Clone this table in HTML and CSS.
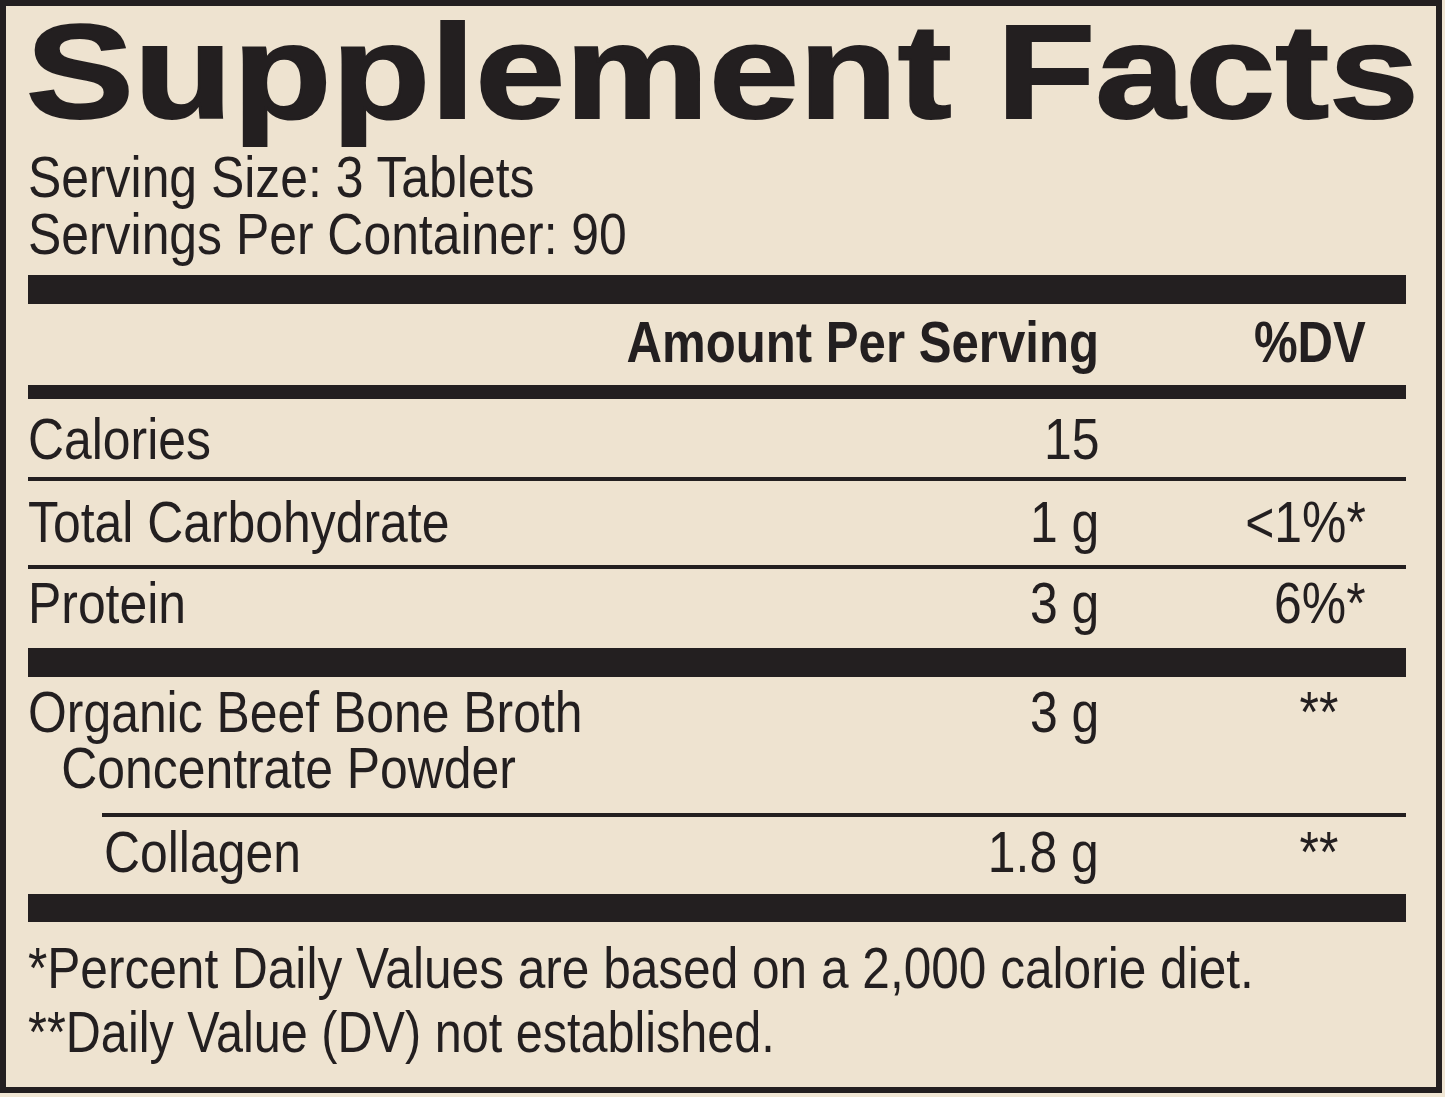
FILE: index.html
```html
<!DOCTYPE html>
<html lang="en">
<head>
<meta charset="utf-8">
<title>Supplement Facts</title>
<link rel="stylesheet" href="styles.css">
</head>
<body>
<div class="label">
  <h1 class="title"><span>Supplement Facts</span></h1>
  <div class="serving">
    <span class="c">Serving Size: 3 Tablets<br>Servings Per Container: 90</span>
  </div>
  <div class="bar bar-thick"></div>
  <div class="row row-head">
    <div class="amt-head"><span class="c r">Amount Per Serving</span></div>
    <div class="dv"><span class="c r">%DV</span></div>
  </div>
  <div class="bar bar-mid"></div>
  <div class="row row-cal">
    <div class="name"><span class="c">Calories</span></div>
    <div class="amt"><span class="c r">15</span></div>
    <div class="dv"></div>
  </div>
  <div class="row row-carb ruled">
    <div class="name"><span class="c">Total Carbohydrate</span></div>
    <div class="amt"><span class="c r">1 g</span></div>
    <div class="dv"><span class="c r">&lt;1%*</span></div>
  </div>
  <div class="row row-prot ruled">
    <div class="name"><span class="c">Protein</span></div>
    <div class="amt"><span class="c r">3 g</span></div>
    <div class="dv"><span class="c r">6%*</span></div>
  </div>
  <div class="bar bar-thick"></div>
  <div class="row row-broth">
    <div class="name">
      <span class="c">Organic Beef Bone Broth<br><span class="indent">Concentrate Powder</span></span>
    </div>
    <div class="amt"><span class="c r">3 g</span></div>
    <div class="dv nd"><span class="c r">**</span></div>
  </div>
  <div class="row row-coll ruled">
    <div class="name"><span class="c">Collagen</span></div>
    <div class="amt"><span class="c r">1.8 g</span></div>
    <div class="dv nd"><span class="c r">**</span></div>
  </div>
  <div class="bar bar-thick bar-last"></div>
  <div class="notes">
    <div><span class="c">*Percent Daily Values are based on a 2,000 calorie diet.</span></div>
    <div><span class="c tight">**Daily Value (DV) not established.</span></div>
  </div>
</div>
</body>
</html>
```
FILE: styles.css
```css
html, body {
  margin: 0;
  padding: 0;
  background: #f0e6d4;
}

.label {
  box-sizing: border-box;
  width: 1442px;
  height: 1093px;
  border: 6px solid #231f20;
  background: #eee3d0;
  color: #231f20;
  padding: 0 30px 0 22px;
  font-family: "Liberation Sans", Arial, Helvetica, sans-serif;
  font-size: 57px;
  line-height: 57px;
}

/* condensed text: Helvetica Condensed look */
.c {
  display: inline-block;
  white-space: nowrap;
  transform: scaleX(0.875);
  transform-origin: left center;
}
.c.r {
  transform-origin: right center;
}

.title {
  margin: 0 0 0 -2px;
  font-size: 133px;
  line-height: 133px;
  font-weight: 700;
  white-space: nowrap;
}
.title span {
  display: inline-block;
  transform: scaleX(1.216);
  transform-origin: left center;
  -webkit-text-stroke: 2px #231f20;
}

.serving {
  margin-top: 10px;
}

.bar {
  background: #231f20;
}
.bar-thick {
  height: 29px;
}
.serving + .bar-thick {
  margin-top: 12px;
}
.bar-last {
  height: 28px;
}
.bar-mid {
  height: 14px;
}

.row {
  display: grid;
  grid-template-columns: 1fr 300px 267px;
  padding-right: 40px;
}
.row.ruled {
  border-top: 4px solid #231f20;
}
.amt, .dv {
  text-align: right;
}
.dv.nd {
  padding-right: 28px;
}
.amt-head {
  grid-column: 1 / 3;
  text-align: right;
  font-weight: 700;
}
.row-head .c {
  transform: scaleX(0.862);
}
.row-head .dv {
  font-weight: 700;
}

.row-head { padding-top: 10px; padding-bottom: 14px; }
.row-cal { padding-top: 12px; padding-bottom: 9px; }
.row-carb { padding-top: 13px; padding-bottom: 14px; }
.row-prot { padding-top: 6px; padding-bottom: 16px; }
.row-broth {
  padding-top: 7px;
  padding-bottom: 17px;
  line-height: 56px;
}
.row-coll {
  margin-left: 74px;
  padding-top: 7px;
  padding-bottom: 13px;
}
.row-coll .name {
  padding-left: 2px;
}

.indent {
  display: inline-block;
  margin-left: 38px;
}

.notes {
  margin-top: 14px;
  line-height: 64px;
}
.notes .c {
  transform: scaleX(0.87);
}
.notes .c.tight {
  transform: scaleX(0.852);
}
```
